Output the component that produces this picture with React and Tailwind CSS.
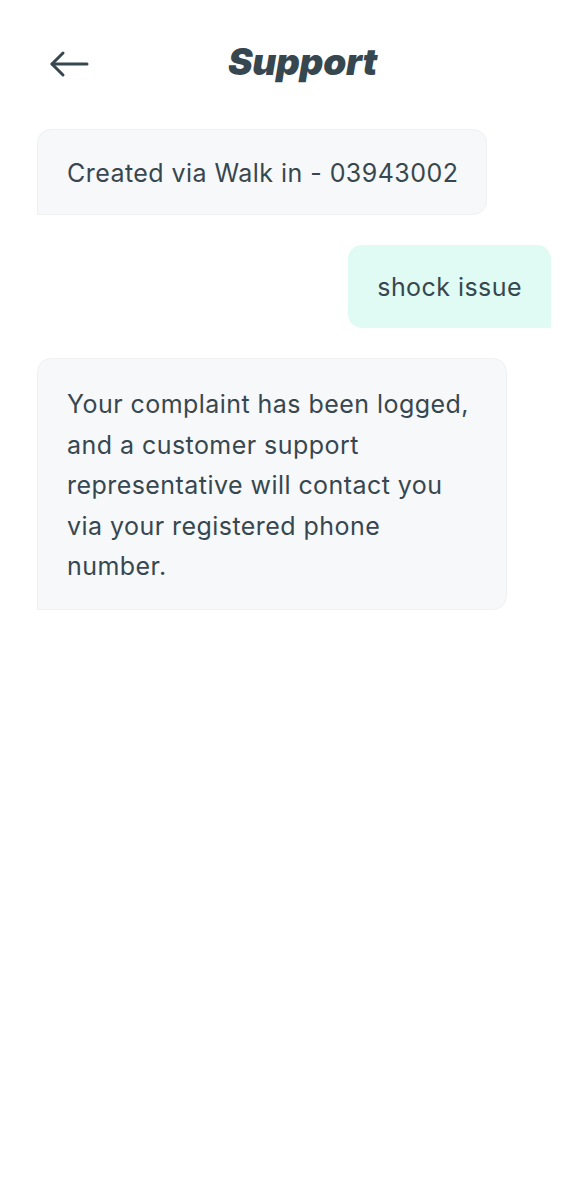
export default function App() {
  const font = { fontFamily: 'Inter, "Noto Sans", sans-serif' };
  return (
    <div className="w-[587px] h-[1200px] bg-white text-[#37474f]" style={font}>
      <div className="relative flex items-center h-[64px] mt-[30px] px-[48px]">
        <svg width="42" height="30" viewBox="0 0 42 30" fill="none" stroke="#37474f" strokeWidth="3" strokeLinecap="round" strokeLinejoin="round" className="mt-[4px]">
          <path d="M4 15 H39" />
          <path d="M15 4 L4 15 L15 26" />
        </svg>
        <div className="absolute left-0 right-0 text-center pointer-events-none">
          <span className="text-[37px] font-black italic tracking-[-0.3px] ml-[18px]">Support</span>
        </div>
      </div>
      <div className="flex flex-col px-[37px] pt-[35px] tracking-[0.45px]">
        <div className="self-start w-[450px] whitespace-nowrap bg-[#f7f8fa] border border-[#eef0f2] rounded-[14px] rounded-bl-none px-[29px] pt-[27px] pb-[25px] text-[25px] leading-[32px]">
          Created via Walk in - 03943002
        </div>
        <div className="self-end mr-[-1px] mt-[30px] bg-[#dffbf3] rounded-[14px] rounded-br-none px-[29px] pt-[26px] pb-[25px] text-[25px] leading-[32px]">
          shock issue
        </div>
        <div className="self-start w-[470px] mt-[30px] bg-[#f7f8fa] border border-[#eef0f2] rounded-[14px] rounded-bl-none pl-[29px] pr-[37px] pt-[25px] pb-[22px] text-[25px] leading-[40.5px]">
          Your complaint has been logged, and a customer support representative will contact you via your registered phone number.
        </div>
      </div>
    </div>
  );
}
